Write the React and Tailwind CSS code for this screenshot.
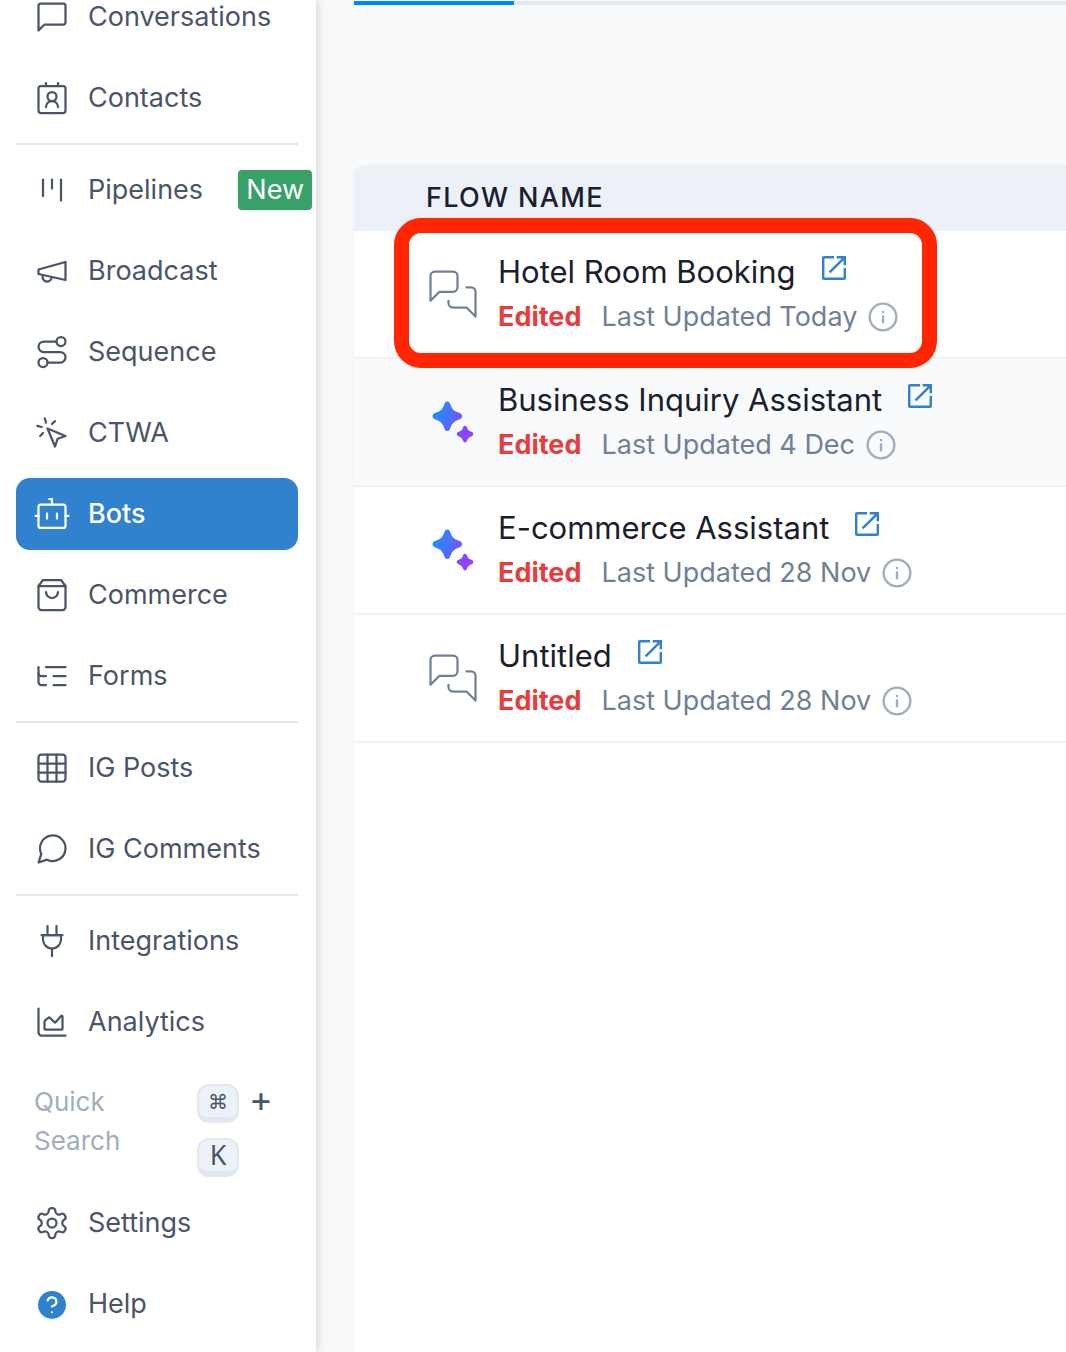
import React from "react";

function Icon({ paths, children, className = "size-9", strokeWidth = 1.5 }) {
  return (
    <svg
      viewBox="0 0 24 24"
      className={`${className} shrink-0`}
      fill="none"
      stroke="currentColor"
      strokeWidth={strokeWidth}
      strokeLinecap="round"
      strokeLinejoin="round"
      aria-hidden="true"
    >
      {paths && paths.map((d) => <path key={d} d={d} />)}
      {children}
    </svg>
  );
}

const icons = {
  conversations: (
    <Icon paths={["M21 15.5a1.5 1.5 0 0 1-1.5 1.5H7l-4 4V4.5A1.5 1.5 0 0 1 4.5 3h15A1.5 1.5 0 0 1 21 4.5z"]} />
  ),
  contacts: (
    <Icon paths={["M16 18a4 4 0 0 0-8 0", "M8 2v2", "M16 2v2"]}>
      <circle cx="12" cy="11" r="3" />
      <rect x="3" y="4" width="18" height="18" rx="1.6" />
    </Icon>
  ),
  pipelines: <Icon paths={["M6 5v11", "M12 5v6", "M18 5v14"]} />,
  broadcast: <Icon paths={["m3 11 18-5v12L3 14v-3z", "M11.6 16.8a3 3 0 1 1-5.8-1.6"]} />,
  sequence: (
    <Icon paths={["M9 19h8.5a3.5 3.5 0 0 0 0-7h-11a3.5 3.5 0 0 1 0-7H15"]}>
      <circle cx="6" cy="19" r="3" />
      <circle cx="18" cy="5" r="3" />
    </Icon>
  ),
  ctwa: (
    <Icon paths={["m9 9 5 12 1.8-5.2L21 14Z", "M7.2 2.2 8 5.1", "m5.1 8-2.9-.8", "M14 4.1 12 6", "m6 12-1.9 2"]} />
  ),
  bots: (
    <Icon paths={["M10.2 2H12v3.7", "M1 13.3h2", "M21 13.3h2", "M8.7 11.8v3.2", "M15.3 11.8v3.2"]}>
      <rect x="3" y="5.7" width="18" height="15.6" rx="1.5" />
    </Icon>
  ),
  commerce: (
    <Icon paths={["M6 2 3 6v14a2 2 0 0 0 2 2h14a2 2 0 0 0 2-2V6l-3-4Z", "M3 6h18", "M16 10a4 4 0 0 1-8 0"]} />
  ),
  forms: (
    <Icon paths={["M21 12h-8", "M21 6H8", "M21 18h-8", "M3 6v4c0 1.1.9 2 2 2h3", "M3 10v6c0 1.1.9 2 2 2h3"]} />
  ),
  posts: (
    <Icon paths={["M3 9h18", "M3 15h18", "M9 3v18", "M15 3v18"]}>
      <rect x="3" y="3" width="18" height="18" rx="2" />
    </Icon>
  ),
  comments: <Icon paths={["m3 21 1.9-5.7a8.5 8.5 0 1 1 3.8 3.8z"]} />,
  integrations: (
    <Icon paths={["M9 2v6", "M15 2v6", "M12 17v5", "M5 8h14", "M6 11V8h12v3a6 6 0 1 1-12 0Z"]} />
  ),
  analytics: (
    <Icon paths={["M3 3v16a2 2 0 0 0 2 2h16", "M7 11.5v5a.5.5 0 0 0 .5.5h11a.5.5 0 0 0 .5-.5V8.3a.5.5 0 0 0-.9-.3l-3.7 4.2a.5.5 0 0 1-.7 0l-3.3-3.1a.5.5 0 0 0-.7 0l-2.5 2a.5.5 0 0 0-.2.4Z"]} />
  ),
  settings: (
    <Icon
      paths={[
        "M12.22 2h-.44a2 2 0 0 0-2 2v.18a2 2 0 0 1-1 1.73l-.43.25a2 2 0 0 1-2 0l-.15-.08a2 2 0 0 0-2.73.73l-.22.38a2 2 0 0 0 .73 2.73l.15.1a2 2 0 0 1 1 1.72v.51a2 2 0 0 1-1 1.74l-.15.09a2 2 0 0 0-.73 2.73l.22.38a2 2 0 0 0 2.73.73l.15-.08a2 2 0 0 1 2 0l.43.25a2 2 0 0 1 1 1.73V20a2 2 0 0 0 2 2h.44a2 2 0 0 0 2-2v-.18a2 2 0 0 1 1-1.73l.43-.25a2 2 0 0 1 2 0l.15.08a2 2 0 0 0 2.73-.73l.22-.39a2 2 0 0 0-.73-2.73l-.15-.08a2 2 0 0 1-1-1.74v-.5a2 2 0 0 1 1-1.74l.15-.09a2 2 0 0 0 .73-2.73l-.22-.38a2 2 0 0 0-2.73-.73l-.15.08a2 2 0 0 1-2 0l-.43-.25a2 2 0 0 1-1-1.73V4a2 2 0 0 0-2-2z",
      ]}
    >
      <circle cx="12" cy="12" r="3" />
    </Icon>
  ),
  help: (
    <Icon>
      <circle cx="12" cy="12.6" r="9.3" fill="#3182ce" stroke="none" />
      <path d="M9.09 9.6a3 3 0 0 1 5.83 1c0 2-3 3-3 3M12 17.5h.01" stroke="#fff" />
    </Icon>
  ),
};

const groups = [
  [
    ["conversations", "Conversations"],
    ["contacts", "Contacts"],
  ],
  [
    ["pipelines", "Pipelines"],
    ["broadcast", "Broadcast"],
    ["sequence", "Sequence"],
    ["ctwa", "CTWA"],
    ["bots", "Bots"],
    ["commerce", "Commerce"],
    ["forms", "Forms"],
  ],
  [
    ["posts", "IG Posts"],
    ["comments", "IG Comments"],
  ],
  [
    ["integrations", "Integrations"],
    ["analytics", "Analytics"],
  ],
];

function NavItem({ id, label }) {
  const active = id === "bots";
  return (
    <a
      href={`#${id}`}
      aria-current={active ? "page" : undefined}
      className={`flex h-[72px] items-center gap-[18px] rounded-[14px] px-[18px] text-[27px] leading-10 ${
        active ? "bg-[#3182ce] font-medium text-white" : "text-[#4a5568]"
      }`}
    >
      {icons[id]}
      <span>{label}</span>
      {id === "pipelines" && (
        <span className="-mr-8 ml-auto rounded bg-[#38a169] px-2 text-white">New</span>
      )}
    </a>
  );
}

function Key({ children, className }) {
  return (
    <kbd
      className={`flex h-[39px] w-[42px] items-center justify-center rounded-xl border-2 border-b-[6px] border-[#e2e8f0] bg-[#edf2f9] font-sans ${className}`}
    >
      {children}
    </kbd>
  );
}

function Sidebar() {
  return (
    <nav className="z-10 w-[316px] shrink-0 bg-white pr-[18px] pb-3 pl-4 shadow-[0_0_12px_rgba(0,0,0,0.2)]">
      <div className="-mt-[19px] flex flex-col gap-[9px]">
        {groups.map((group, i) => (
          <React.Fragment key={i}>
            {i > 0 && <hr className="border-t-2 border-[#e2e8f0]" />}
            {group.map(([id, label]) => (
              <NavItem key={id} id={id} label={label} />
            ))}
          </React.Fragment>
        ))}
        <button type="button" className="flex h-[111px] items-start justify-between px-[18px] pt-[15px] text-left">
          <span className="w-24 text-[26px] leading-[39px] text-[#a0aec0]">Quick Search</span>
          <span className="grid grid-cols-[42px_20px] gap-x-3 gap-y-[15px] pt-[2px] pr-[9px] text-[#4a5568]">
            <Key className="text-xl">⌘</Key>
            <span className="flex justify-center text-[36px] leading-[30px]">+</span>
            <Key className="text-[27px]">K</Key>
          </span>
        </button>
        <NavItem id="settings" label="Settings" />
        <NavItem id="help" label="Help" />
      </div>
    </nav>
  );
}

function ChatIcon() {
  return (
    <span className="text-[#718096]">
      <Icon
        className="size-[54px]"
        strokeWidth={1}
        paths={[
          "M14 9a2 2 0 0 1-2 2H6l-4 4V4a2 2 0 0 1 2-2h8a2 2 0 0 1 2 2z",
          "M18 9h2a2 2 0 0 1 2 2v11l-4-4h-6a2 2 0 0 1-2-2v-1",
        ]}
      />
    </span>
  );
}

function SparkleIcon({ id }) {
  return (
    <svg viewBox="0 -1 54 54" className="size-[54px] shrink-0" aria-hidden="true">
      <defs>
        <linearGradient id={id} gradientUnits="userSpaceOnUse" x1="6" y1="20" x2="48" y2="36">
          <stop offset="0" stopColor="#1a91ff" />
          <stop offset="1" stopColor="#a136ff" />
        </linearGradient>
      </defs>
      <g fill={`url(#${id})`}>
        <path d="M21.3 5.5c1.7 0 2.5 1.2 3 2.7 1.5 4.6 3.5 6.6 8.2 8.4 1.7.6 3.6 1.5 3.6 3.6s-1.9 3-3.6 3.6c-4.7 1.8-6.7 3.8-8.2 8.4-.5 1.5-1.3 2.7-3 2.7s-2.5-1.2-3-2.7c-1.5-4.6-3.5-6.6-8.2-8.4-1.7-.6-3.6-1.5-3.6-3.6s1.9-3 3.6-3.6c4.7-1.8 6.7-3.8 8.2-8.4.5-1.5 1.3-2.7 3-2.7Z" />
        <path d="M39 29.8c1.1 0 1.7.8 2 1.8.8 2.4 1.7 3.3 4.1 4.2 1.2.4 2.2 1.1 2.2 2.3s-1 1.9-2.2 2.3c-2.4.9-3.3 1.8-4.1 4.2-.3 1-.9 1.8-2 1.8s-1.7-.8-2-1.8c-.8-2.4-1.7-3.3-4.1-4.2-1.2-.4-2.2-1.1-2.2-2.3s1-1.9 2.2-2.3c2.4-.9 3.3-1.8 4.1-4.2.3-1 .9-1.8 2-1.8Z" />
      </g>
    </svg>
  );
}

const flows = [
  { name: "Hotel Room Booking", updated: "Today", ai: false, marked: true },
  { name: "Business Inquiry Assistant", updated: "4 Dec", ai: true, hovered: true },
  { name: "E-commerce Assistant", updated: "28 Nov", ai: true },
  { name: "Untitled", updated: "28 Nov", ai: false },
];

function FlowRow({ flow, index }) {
  return (
    <tr className={flow.hovered ? "bg-[#f8fafc]" : "bg-white"}>
      <td className="relative h-32 border-b-2 border-[#edf2f7] p-0 pl-[72px]">
        <div className="flex items-center gap-[18px]">
          {flow.ai ? <SparkleIcon id={`sparkle-${index}`} /> : <ChatIcon />}
          <div className="pb-[2px] whitespace-nowrap">
            <div className="flex items-center gap-[22px] text-[31px] leading-[48px] text-[#1a202c]">
              {flow.name}
              <a href={`#flow-${index}`} aria-label={`Open ${flow.name}`} className="mb-2 text-[#3182ce]">
                <svg viewBox="0 0 24 24" className="size-8" fill="currentColor" aria-hidden="true">
                  <path d="M19.2 19.2H4.8V4.8H12V3H4.5A1.5 1.5 0 0 0 3 4.5v15A1.5 1.5 0 0 0 4.5 21h15a1.5 1.5 0 0 0 1.5-1.5V12h-1.8v7.2zM14 3v1.8h3.9L8 14.7 9.3 16l9.9-9.9V10H21V3h-7z" />
                </svg>
              </a>
            </div>
            <div className="flex items-center text-[27px] leading-[42px] text-[#718096]">
              <span className="mr-5 font-bold text-[#e53e3e]">Edited</span>
              <span className="mr-[10px]">Last Updated {flow.updated}</span>
              <button type="button" aria-label={`Details of ${flow.name}`} className="text-[#a0aec0]">
                <Icon className="size-8" strokeWidth={1.8}>
                  <circle cx="12" cy="12" r="10" />
                  <path d="M12 11.6v4.4M12 8.2h.01" />
                </Icon>
              </button>
            </div>
          </div>
        </div>
        {flow.marked && (
          <div className="pointer-events-none absolute -top-[13px] left-10 z-10 h-[150px] w-[543px] rounded-[27px] border-[15px] border-[#ff2600]" />
        )}
      </td>
    </tr>
  );
}

export default function App() {
  return (
    <div className="flex min-h-screen overflow-hidden bg-[#f8fafc] font-['Inter',sans-serif]">
      <Sidebar />
      <main className="flex min-w-0 flex-1 flex-col pt-px pl-[38px]">
        <div className="h-1 bg-[#e2e8f0]">
          <div className="h-full w-40 bg-[#0084ff]" />
        </div>
        <section className="mt-40 flex-1 rounded-tl-xl bg-white shadow-[0_0_3px_rgba(0,0,0,0.06)]">
          <table className="w-full border-separate border-spacing-0 text-left">
            <thead>
              <tr>
                <th
                  scope="col"
                  className="h-[66px] rounded-tl-xl bg-[#ecf1f8] p-0 pl-[72px] text-[27px] font-medium tracking-wider text-[#1a202c]"
                >
                  FLOW NAME
                </th>
              </tr>
            </thead>
            <tbody>
              {flows.map((flow, i) => (
                <FlowRow key={flow.name} flow={flow} index={i} />
              ))}
            </tbody>
          </table>
        </section>
      </main>
    </div>
  );
}
